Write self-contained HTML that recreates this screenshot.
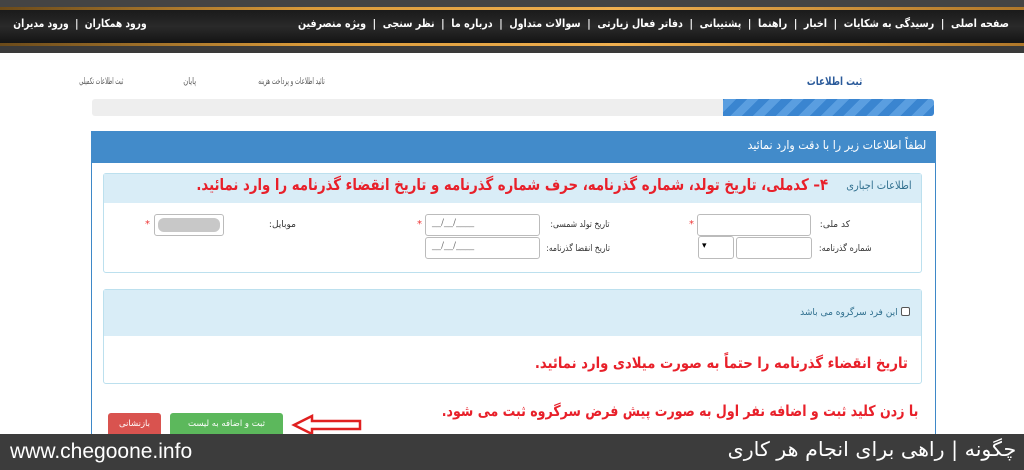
<!DOCTYPE html>
<html><head><meta charset="utf-8"><style>
*{margin:0;padding:0;box-sizing:border-box}
body{width:1024px;height:470px;overflow:hidden;background:#fff;font-family:"DejaVu Sans","Liberation Sans",sans-serif;position:relative}
.a{position:absolute;white-space:nowrap}
.r{direction:rtl;transform-origin:right center}
.l{transform-origin:left center}
</style></head><body>
<div class="a" style="left:0;top:0;width:1024px;height:53px;background:#444"></div>
<div class="a" style="left:0;top:7px;width:1024px;height:3px;background:linear-gradient(90deg,#6a4a1a,#d99a3a 30%,#f0b050 60%,#b0782a)"></div>
<div class="a" style="left:0;top:10px;width:1024px;height:33px;background:linear-gradient(#1a1a1a,#2a2a2a 50%,#141414)"></div>
<div class="a" style="left:0;top:43px;width:1024px;height:3px;background:linear-gradient(90deg,#6a4a1a,#d99a3a 30%,#f0b050 60%,#b0782a)"></div>
<div class="a" style="left:0;top:46px;width:1024px;height:7px;background:#3a3a3a"></div>
<div class="a r" style="right:15px;top:17px;color:#fff;font-size:11px;font-weight:bold;transform:scaleX(.865)">صفحه اصلی &nbsp;|&nbsp; رسیدگی به شکایات &nbsp;|&nbsp; اخبار &nbsp;|&nbsp; راهنما &nbsp;|&nbsp; پشتیبانی &nbsp;|&nbsp; دفاتر فعال زیارتی &nbsp;|&nbsp; سوالات متداول &nbsp;|&nbsp; درباره ما &nbsp;|&nbsp; نظر سنجی &nbsp;|&nbsp; ویژه منصرفین</div>
<div class="a r" style="right:877px;top:17px;color:#fff;font-size:11px;font-weight:bold;transform:scaleX(.83)">ورود همکاران &nbsp;|&nbsp; ورود مدیران</div>

<div class="a r" style="right:162px;top:75px;color:#2a5a9a;font-size:11px;font-weight:bold;transform:scaleX(.8)">ثبت اطلاعات</div>
<div class="a r" style="right:699px;top:77px;color:#555;font-size:9px;transform:scaleX(.6)">تائید اطلاعات و پرداخت هزینه</div>
<div class="a r" style="right:828px;top:77px;color:#555;font-size:9px;transform:scaleX(.75)">پایان</div>
<div class="a r" style="right:901px;top:77px;color:#555;font-size:9px;transform:scaleX(.57)">ثبت اطلاعات تکمیلی</div>
<div class="a" style="left:92px;top:99px;width:842px;height:17px;background:#eee;border-radius:3px"></div>
<div class="a" style="left:723px;top:99px;width:211px;height:17px;background:repeating-linear-gradient(-45deg,#3a85d0 0 8px,#5a9ee0 8px 16px);border-radius:0 3px 3px 0"></div>

<div class="a" style="left:91px;top:131px;width:845px;height:310px;border:1px solid #3e88c8;border-bottom:none;background:#fff"></div>
<div class="a" style="left:91px;top:131px;width:845px;height:32px;background:#428bca"></div>
<div class="a r" style="right:98px;top:138px;color:#fff;font-size:12px;transform:scaleX(.92)">لطفاً اطلاعات زیر را با دقت وارد نمائید</div>

<div class="a" style="left:103px;top:173px;width:819px;height:100px;border:1px solid #bce0ee;border-radius:3px"></div>
<div class="a" style="left:104px;top:174px;width:817px;height:29px;background:#d9edf7"></div>
<div class="a r" style="right:112px;top:179px;color:#31708f;font-size:11px;transform:scaleX(.9)">اطلاعات اجباری</div>
<div class="a r" style="right:196px;top:175px;color:#e8202a;font-size:16px;font-weight:bold;transform:scaleX(.83)">۴– کدملی، تاریخ تولد، شماره گذرنامه، حرف شماره گذرنامه و تاریخ انقضاء گذرنامه را وارد نمائید.</div>

<div class="a r" style="right:174px;top:220px;font-size:9px;color:#333">کد ملی:</div>
<div class="a" style="left:697px;top:214px;width:114px;height:22px;border:1px solid #bbb;border-radius:3px"></div>
<div class="a" style="left:689px;top:219px;color:#e33;font-size:10px">*</div>
<div class="a r" style="right:152px;top:244px;font-size:9px;color:#333;transform:scaleX(.9)">شماره گذرنامه:</div>
<div class="a" style="left:736px;top:237px;width:76px;height:22px;border:1px solid #bbb;border-radius:3px"></div>
<div class="a" style="left:698px;top:236px;width:36px;height:23px;border:1px solid #bbb;border-radius:3px;font-size:9px;padding:4px 3px">&#9662;</div>

<div class="a r" style="right:414px;top:220px;font-size:9px;color:#333;transform:scaleX(.85)">تاریخ تولد شمسی:</div>
<div class="a" style="left:425px;top:214px;width:115px;height:22px;border:1px solid #bbb;border-radius:3px;color:#777;font-size:9px;padding:3px 6px">__/__/____</div>
<div class="a" style="left:417px;top:219px;color:#e33;font-size:10px">*</div>
<div class="a r" style="right:414px;top:244px;font-size:9px;color:#333;transform:scaleX(.85)">تاریخ انقضا گذرنامه:</div>
<div class="a" style="left:425px;top:237px;width:115px;height:22px;border:1px solid #bbb;border-radius:3px;color:#777;font-size:9px;padding:3px 6px">__/__/____</div>

<div class="a r" style="right:728px;top:220px;font-size:9px;color:#333">موبایل:</div>
<div class="a" style="left:154px;top:214px;width:70px;height:22px;border:1px solid #bbb;border-radius:3px;background:#fff"></div>
<div class="a" style="left:158px;top:218px;width:62px;height:14px;background:#c8c8c8;border-radius:6px"></div>
<div class="a" style="left:145px;top:219px;color:#e33;font-size:10px">*</div>

<div class="a" style="left:103px;top:289px;width:819px;height:95px;border:1px solid #bce0ee;border-radius:3px"></div>
<div class="a" style="left:104px;top:290px;width:817px;height:46px;background:#d9edf7"></div>
<div class="a" style="left:901px;top:307px;width:9px;height:9px;border:1px solid #555;border-radius:2px;background:#fff"></div>
<div class="a r" style="right:126px;top:307px;color:#31708f;font-size:9.5px;transform:scaleX(.95)">این فرد سرگروه می باشد</div>
<div class="a r" style="right:116px;top:354px;color:#e8202a;font-size:15px;font-weight:bold;transform:scaleX(.88)">تاریخ انقضاء گذرنامه را حتماً به صورت میلادی وارد نمائید.</div>

<div class="a r" style="right:106px;top:402px;color:#e8202a;font-size:15px;font-weight:bold;transform:scaleX(.84)">با زدن کلید ثبت و اضافه نفر اول به صورت پیش فرض سرگروه ثبت می شود.</div>
<div class="a" style="left:108px;top:413px;width:53px;height:25px;background:#d9534f;border-radius:3px;color:#fff;font-size:8.5px;text-align:center;padding-top:6px">بازنشانی</div>
<div class="a" style="left:170px;top:413px;width:113px;height:25px;background:#5cb85c;border-radius:3px;color:#fff;font-size:8.5px;text-align:center;padding-top:6px">ثبت و اضافه به لیست</div>
<svg class="a" style="left:290px;top:414px" width="75" height="22"><path d="M4 11 L22 2 L22 7 L70 7 L70 15 L22 15 L22 20 Z" fill="#fff" stroke="#e02020" stroke-width="2.5"/></svg>

<div class="a" style="left:0;top:434px;width:1024px;height:36px;background:#3c3c3c"></div>
<div class="a l" style="left:10px;top:440px;color:#fff;font-size:21px;font-family:'Liberation Sans',sans-serif;transform:scaleX(1.0)">www.chegoone.info</div>
<div class="a r" style="right:8px;top:437px;color:#fff;font-size:20px;transform:scaleX(1.03)">چگونه | راهی برای انجام هر کاری</div>
</body></html>
